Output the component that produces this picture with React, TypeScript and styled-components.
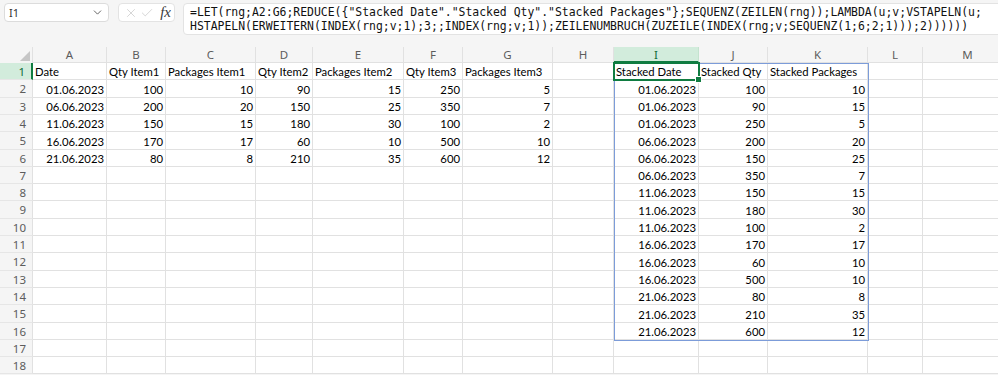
import styled, { createGlobalStyle } from 'styled-components'
import { ChevronDown, X, Check } from 'lucide-react'

const GlobalStyle = createGlobalStyle`
  html, body {
    margin: 0;
    padding: 0;
    background: #ffffff;
    overflow: hidden;
  }
`

// column widths incl. right gridline
const columns = [
  { name: 'A', w: 74 },
  { name: 'B', w: 59 },
  { name: 'C', w: 90 },
  { name: 'D', w: 57 },
  { name: 'E', w: 91 },
  { name: 'F', w: 59 },
  { name: 'G', w: 90 },
  { name: 'H', w: 61 },
  { name: 'I', w: 85 },
  { name: 'J', w: 69 },
  { name: 'K', w: 100 },
  { name: 'L', w: 55 },
  { name: 'M', w: 90 },
]

const ROW_HDR = 33
const HEAD_H = 16
const ROW_COUNT = 18
const ROW_STEP = 17.3

const rowTops = Array.from({ length: ROW_COUNT + 1 }, (_, i) => Math.round(i * ROW_STEP))
const rowHeights = rowTops.slice(1).map((t, i) => t - rowTops[i])

const colLeft = (idx: number) =>
  ROW_HDR + columns.slice(0, idx).reduce((s, c) => s + c.w, 0)

const source = [
  ['Date', 'Qty Item1', 'Packages Item1', 'Qty Item2', 'Packages Item2', 'Qty Item3', 'Packages Item3'],
  ['01.06.2023', '100', '10', '90', '15', '250', '5'],
  ['06.06.2023', '200', '20', '150', '25', '350', '7'],
  ['11.06.2023', '150', '15', '180', '30', '100', '2'],
  ['16.06.2023', '170', '17', '60', '10', '500', '10'],
  ['21.06.2023', '80', '8', '210', '35', '600', '12'],
]

const stacked: string[][] = [['Stacked Date', 'Stacked Qty', 'Stacked Packages']]
source.slice(1).forEach((r) => {
  stacked.push([r[0], r[1], r[2]])
  stacked.push([r[0], r[3], r[4]])
  stacked.push([r[0], r[5], r[6]])
})

const cellText = (row: number, col: number): string => {
  if (col < 7) return source[row]?.[col] ?? ''
  if (col >= 8 && col <= 10) return stacked[row]?.[col - 8] ?? ''
  return ''
}

const Page = styled.div`
  width: 998px;
  height: 375px;
  background: #f5f5f5;
  font-family: 'Lato', 'Liberation Sans', sans-serif;
`

const TopBar = styled.div`
  height: 47px;
  display: flex;
  align-items: flex-start;
  padding: 3px 0 0 4px;
  box-sizing: border-box;
  gap: 8px;
  overflow: hidden;
`

const NameBox = styled.div`
  width: 105px;
  height: 19px;
  box-sizing: border-box;
  background: #fff;
  border: 1px solid #dcdcdc;
  border-radius: 4px;
  display: flex;
  align-items: center;
  justify-content: space-between;
  padding: 0 4px 0 4px;
  font-family: 'Noto Sans', 'Liberation Sans', sans-serif;
  font-size: 11px;
  color: #333;
`

const FxBox = styled.div`
  width: 57px;
  height: 19px;
  margin-left: 1px;
  box-sizing: border-box;
  background: #fff;
  border: 1px solid #e3e3e3;
  border-radius: 4px;
  display: flex;
  align-items: center;
  padding: 0 3px 0 5px;
  gap: 2px;
  color: #c4c4c4;
`

const Fx = styled.span`
  margin-left: auto;
  font-family: 'Liberation Serif', serif;
  font-style: italic;
  font-size: 15px;
  color: #3a3a3a;
  line-height: 1;
`

const FormulaBox = styled.div`
  flex: 1;
  height: 32px;
  margin-right: -20px;
  box-sizing: border-box;
  background: #fff;
  border: 1px solid #e3e3e3;
  border-radius: 4px;
  padding: 1px 0 0 6px;
  font-family: 'DejaVu Sans Mono', 'Liberation Mono', monospace;
  font-size: 11.45px;
  line-height: 14px;
  color: #111;
  white-space: pre;
  overflow: hidden;
`

const Sheet = styled.div`
  position: relative;
  display: grid;
  grid-template-columns: ${ROW_HDR}px ${columns.map((c) => `${c.w}px`).join(' ')};
  grid-template-rows: ${HEAD_H}px ${rowHeights.map((h) => `${h}px`).join(' ')};
  background: #fff;
`

const Corner = styled.div`
  background: #f5f5f5;
  border-right: 1px solid #e1e1e1;
  position: relative;
  &::after {
    content: '';
    position: absolute;
    right: 2px;
    bottom: 2px;
    border-style: solid;
    border-width: 0 0 10px 10px;
    border-color: transparent transparent #c6c6c6 transparent;
  }
`

const ColHead = styled.div<{ $active?: boolean }>`
  box-sizing: border-box;
  display: flex;
  align-items: center;
  justify-content: center;
  font-family: 'Noto Sans', 'Liberation Sans', sans-serif;
  font-size: 11.5px;
  color: ${(p) => (p.$active ? '#0e6b38' : '#5c5c5c')};
  background: ${(p) => (p.$active ? '#d2ecdc' : '#f5f5f5')};
  border-right: 1px solid ${(p) => (p.$active ? '#c4e3cf' : '#e1e1e1')};
  border-bottom: ${(p) => (p.$active ? '2px solid #107c41' : '1px solid #e1e1e1')};
`

const RowHead = styled.div<{ $active?: boolean }>`
  box-sizing: border-box;
  display: flex;
  align-items: center;
  justify-content: flex-end;
  padding-right: 6px;
  font-family: 'Noto Sans', 'Liberation Sans', sans-serif;
  font-size: 11.5px;
  color: ${(p) => (p.$active ? '#0e6b38' : '#5c5c5c')};
  background: ${(p) => (p.$active ? '#d2ecdc' : '#f5f5f5')};
  border-right: ${(p) => (p.$active ? '2px solid #107c41' : '1px solid #e1e1e1')};
  border-bottom: 1px solid #e6e6e6;
`

const Cell = styled.div<{ $right?: boolean }>`
  box-sizing: border-box;
  border-right: 1px solid #e1e1e1;
  border-bottom: 1px solid #e1e1e1;
  display: flex;
  align-items: center;
  justify-content: ${(p) => (p.$right ? 'flex-end' : 'flex-start')};
  padding: 1px 2px 0 2px;
  font-size: 11.3px;
  color: #000;
  white-space: nowrap;
  overflow: visible;
`

const SpillFrame = styled.div`
  position: absolute;
  border: 1px solid #7c9cd9;
  box-sizing: border-box;
  pointer-events: none;
`

const ActiveCell = styled.div`
  position: absolute;
  border: 2px solid #107c41;
  box-sizing: border-box;
  pointer-events: none;
  &::after {
    content: '';
    position: absolute;
    right: -4px;
    bottom: -4px;
    width: 5px;
    height: 5px;
    background: #107c41;
    border: 1px solid #fff;
  }
`

const isNumeric = (t: string) => /^[\d.]+$/.test(t)

const formulaLine1 =
  '=LET(rng;A2:G6;REDUCE({"Stacked Date"."Stacked Qty"."Stacked Packages"};SEQUENZ(ZEILEN(rng));LAMBDA(u;v;VSTAPELN(u;'
const formulaLine2 =
  'HSTAPELN(ERWEITERN(INDEX(rng;v;1);3;;INDEX(rng;v;1));ZEILENUMBRUCH(ZUZEILE(INDEX(rng;v;SEQUENZ(1;6;2;1)));2))))))'

export default function App() {
  const iLeft = colLeft(8)
  const lRight = colLeft(11)
  return (
    <Page>
      <GlobalStyle />
      <TopBar>
        <NameBox>
          <span>I1</span>
          <ChevronDown size={13} color="#444" strokeWidth={1.5} />
        </NameBox>
        <FxBox>
          <X size={14} strokeWidth={1.2} />
          <Check size={14} strokeWidth={1.2} />
          <Fx>fx</Fx>
        </FxBox>
        <FormulaBox>
          {formulaLine1}
          {'\n'}
          {formulaLine2}
        </FormulaBox>
      </TopBar>
      <Sheet>
        <Corner />
        {columns.map((c) => (
          <ColHead key={c.name} $active={c.name === 'I'}>
            {c.name}
          </ColHead>
        ))}
        {Array.from({ length: ROW_COUNT }, (_, r) => [
          <RowHead key={`h${r}`} $active={r === 0}>
            {r + 1}
          </RowHead>,
          ...columns.map((c, ci) => {
            const t = cellText(r, ci)
            return (
              <Cell key={`${r}-${c.name}`} $right={isNumeric(t)}>
                {t}
              </Cell>
            )
          }),
        ])}
        <SpillFrame
          style={{
            left: iLeft,
            top: HEAD_H,
            width: lRight - iLeft + 1,
            height: rowTops[16] + 1,
          }}
        />
        <ActiveCell
          style={{
            left: iLeft - 1,
            top: HEAD_H - 1,
            width: columns[8].w + 2,
            height: rowHeights[0] + 2,
          }}
        />
      </Sheet>
    </Page>
  )
}
